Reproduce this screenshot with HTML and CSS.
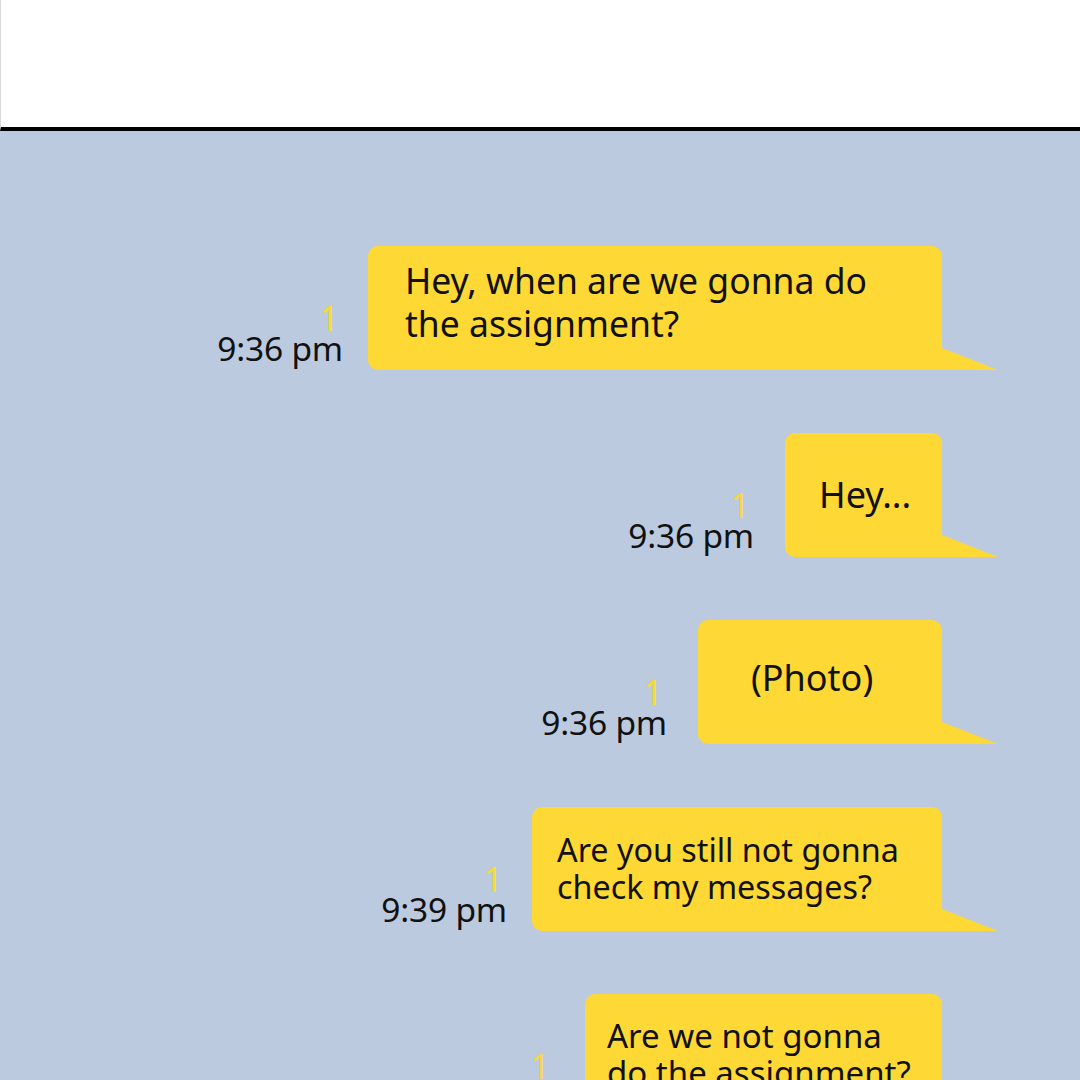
FILE: index.html
```html
<!DOCTYPE html>
<html lang="en">
<head>
<meta charset="utf-8">
<title>Chat</title>
<link rel="stylesheet" href="styles.css">
</head>
<body>
<div class="page">
  <header class="top"></header>
  <main class="chat">
    <div class="row">
      <div class="meta"><span class="unread">1</span><span class="time">9:36 pm</span></div>
      <div class="bubble b1">Hey, when are we gonna do<br>the assignment?</div>
    </div>
    <div class="row wide">
      <div class="meta"><span class="unread">1</span><span class="time">9:36 pm</span></div>
      <div class="bubble b2">Hey...</div>
    </div>
    <div class="row wide">
      <div class="meta"><span class="unread">1</span><span class="time">9:36 pm</span></div>
      <div class="bubble b3">(Photo)</div>
    </div>
    <div class="row">
      <div class="meta"><span class="unread">1</span><span class="time">9:39 pm</span></div>
      <div class="bubble b4">Are you still not gonna<br>check my messages?</div>
    </div>
    <div class="row wide">
      <div class="meta"><span class="unread">1</span><span class="time">9:39 pm</span></div>
      <div class="bubble b5">Are we not gonna<br>do the assignment?</div>
    </div>
  </main>
</div>
</body>
</html>
```
FILE: styles.css
```css
* { box-sizing: border-box; }
html, body { margin: 0; padding: 0; }
body {
  width: 1080px;
  height: 1080px;
  overflow: hidden;
  background: #bbcadf;
  font-family: "Noto Sans", "Open Sans", sans-serif;
  color: #111;
}
.page { display: flex; flex-direction: column; height: 1080px; }
.top {
  height: 131px;
  flex: none;
  background: #fff;
  border-left: 1px solid #d8d8d8;
  border-bottom: 4px solid #000;
}
.chat {
  flex: 1;
  display: flex;
  flex-direction: column;
  align-items: flex-end;
  gap: 63px;
  padding: 115px 138px 0 0;
  overflow: hidden;
}
.row {
  display: flex;
  align-items: flex-end;
  gap: 25px;
  flex: none;
}
.row.wide { gap: 31px; }
.meta {
  display: flex;
  flex-direction: column;
  align-items: flex-end;
  margin-bottom: 4px;
}
.unread {
  font-size: 34px;
  line-height: 24px;
  color: #f6d842;
  font-weight: 400;
  margin-right: 4px;
}
.time {
  font-size: 33.5px;
  line-height: 36px;
  color: #111;
  letter-spacing: -0.2px;
}
.bubble {
  position: relative;
  height: 124px;
  background: #fed835;
  border-radius: 10px 10px 0 10px;
  white-space: nowrap;
}
.bubble::after {
  content: "";
  position: absolute;
  right: -56px;
  bottom: 0;
  width: 56px;
  height: 22px;
  background: #fed835;
  clip-path: polygon(0 0, 100% 100%, 0 100%);
}
.b1 { width: 574px; padding: 13px 0 0 37px; font-size: 35.5px; line-height: 43px; }
.b2 { width: 157px; padding: 40px 0 0 34px; font-size: 36px; line-height: 44px; }
.b3 { width: 244px; padding: 36px 0 0 53px; font-size: 36px; line-height: 44px; }
.b4 { width: 410px; padding: 24px 0 0 25px; font-size: 32.3px; line-height: 37px; }
.b5 { width: 357px; padding: 23px 0 0 22px; font-size: 33px; line-height: 37px; }
```
